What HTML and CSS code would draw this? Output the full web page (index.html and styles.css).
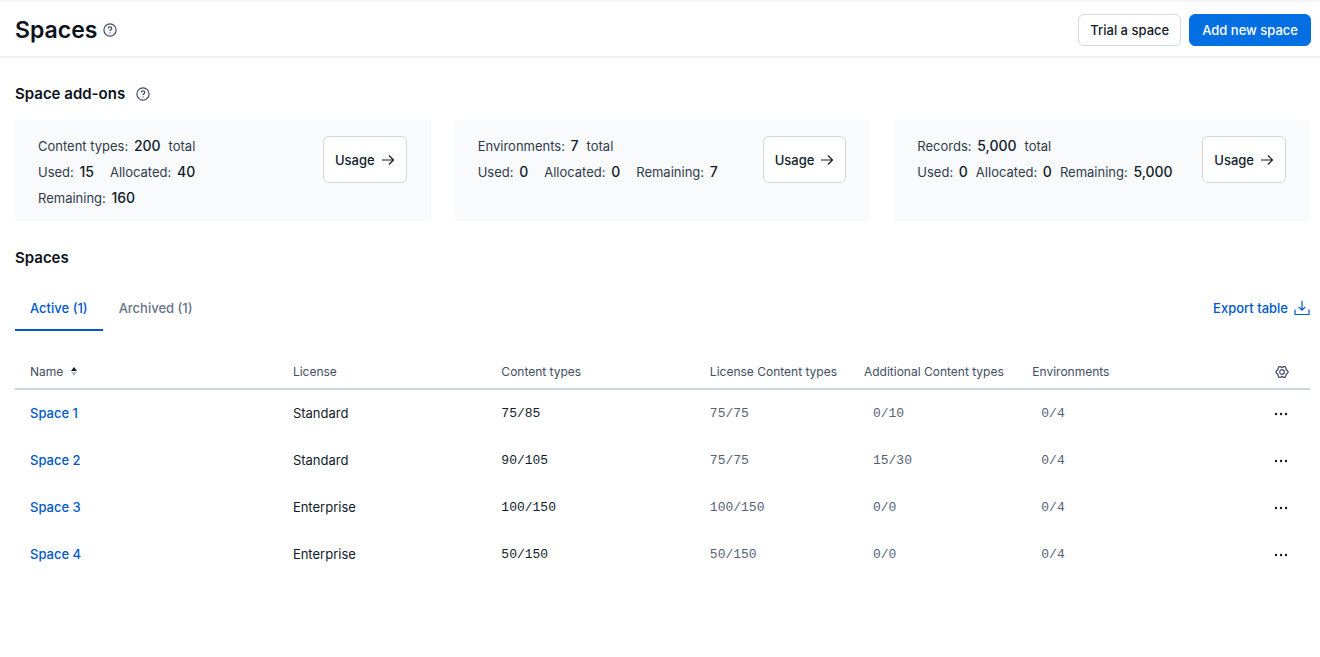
FILE: index.html
```html
<!DOCTYPE html>
<html lang="en">
<head>
    <meta charset="UTF-8">
    <meta name="viewport" content="width=device-width, initial-scale=1.0">
    <title>Spaces</title>
    <link rel="stylesheet" href="styles.css">
</head>
<body>
    <svg class="sprite" aria-hidden="true">
        <symbol id="icon-help" viewBox="0 0 14 14">
            <circle cx="7" cy="7" r="6.1"/>
            <path d="M5.2 5.6c0-1 .8-1.7 1.8-1.7s1.8.7 1.8 1.6c0 1.2-1.8 1.3-1.8 2.5"/>
            <path d="M7 9.5v1"/>
        </symbol>
        <symbol id="icon-arrow" viewBox="0 0 14 12">
            <path d="M1 6h11.5M8 1.5L12.5 6 8 10.5"/>
        </symbol>
        <symbol id="icon-dots" viewBox="0 0 14 4">
            <circle cx="2" cy="2" r="1.2"/>
            <circle cx="7" cy="2" r="1.2"/>
            <circle cx="12" cy="2" r="1.2"/>
        </symbol>
    </svg>

    <header class="page-header">
        <div class="title-group">
            <h1>Spaces</h1>
            <svg class="icon help-icon"><use href="#icon-help"/></svg>
        </div>
        <div class="button-group">
            <button class="btn" type="button">Trial a space</button>
            <button class="btn btn-primary" type="button">Add new space</button>
        </div>
    </header>

    <main>
        <div class="title-group addons-title">
            <h2>Space add-ons</h2>
            <svg class="icon help-icon"><use href="#icon-help"/></svg>
        </div>

        <section class="cards">
            <div class="card">
                <div class="card-info">
                    <div class="card-total"><span>Content types: <b>200</b></span><span>total</span></div>
                    <div class="card-stats"><span>Used: <b>15</b></span><span>Allocated: <b>40</b></span></div>
                    <div class="card-stats"><span>Remaining: <b>160</b></span></div>
                </div>
                <button class="btn usage-btn" type="button">Usage <svg class="icon arrow-icon"><use href="#icon-arrow"/></svg></button>
            </div>
            <div class="card">
                <div class="card-info">
                    <div class="card-total"><span>Environments: <b>7</b></span><span>total</span></div>
                    <div class="card-stats"><span>Used: <b>0</b></span><span>Allocated: <b>0</b></span><span>Remaining: <b>7</b></span></div>
                </div>
                <button class="btn usage-btn" type="button">Usage <svg class="icon arrow-icon"><use href="#icon-arrow"/></svg></button>
            </div>
            <div class="card">
                <div class="card-info">
                    <div class="card-total"><span>Records: <b>5,000</b></span><span>total</span></div>
                    <div class="card-stats compact"><span>Used: <b>0</b></span><span>Allocated: <b>0</b></span><span>Remaining: <b>5,000</b></span></div>
                </div>
                <button class="btn usage-btn" type="button">Usage <svg class="icon arrow-icon"><use href="#icon-arrow"/></svg></button>
            </div>
        </section>

        <h2 class="spaces-title">Spaces</h2>

        <div class="toolbar">
            <div class="tabs" role="tablist">
                <button class="tab active" type="button" role="tab" aria-selected="true">Active (1)</button>
                <button class="tab" type="button" role="tab" aria-selected="false">Archived (1)</button>
            </div>
            <a class="export-link" href="#">Export table
                <svg class="icon export-icon" viewBox="0 0 16 16">
                    <path d="M8 .8v9.4M4.8 7L8 10.2 11.2 7M1 9.5v5h14v-5"/>
                </svg>
            </a>
        </div>

        <table class="spaces-table">
            <colgroup>
                <col class="col-name">
                <col class="col-wide">
                <col class="col-wide">
                <col class="col-included">
                <col class="col-additional">
                <col>
                <col class="col-actions">
            </colgroup>
            <thead>
                <tr>
                    <th>Name
                        <svg class="sort-icon" viewBox="0 0 6 9">
                            <path d="M3 0l3 4H0z" fill="#111b2b"/>
                            <path d="M3 9L0 5h6z" fill="#b4bcc7"/>
                        </svg>
                    </th>
                    <th>License</th>
                    <th>Content types</th>
                    <th>License Content types</th>
                    <th>Additional Content types</th>
                    <th>Environments</th>
                    <th class="actions">
                        <button class="icon-btn" type="button" aria-label="Columns">
                            <svg class="icon gear-icon" viewBox="0 0 14 14">
                                <path d="M4 1.7h1.5l1.5.8 1.5-.8H10l1.1 1.9v1.2l1.4.9.7 1.3-.7 1.3-1.4.9v1.2L10 12.3H8.5L7 11.5l-1.5.8H4l-1.1-1.9V9.2l-1.4-.9L.8 7l.7-1.3 1.4-.9V3.6z"/>
                                <circle cx="7" cy="7" r="2.3"/>
                            </svg>
                        </button>
                    </th>
                </tr>
            </thead>
            <tbody>
                <tr>
                    <td><a href="#">Space 1</a></td>
                    <td>Standard</td>
                    <td class="num">75/85</td>
                    <td class="num muted">75/75</td>
                    <td class="num muted inset">0/10</td>
                    <td class="num muted inset">0/4</td>
                    <td class="actions"><button class="icon-btn" type="button" aria-label="Actions"><svg class="dots-icon"><use href="#icon-dots"/></svg></button></td>
                </tr>
                <tr>
                    <td><a href="#">Space 2</a></td>
                    <td>Standard</td>
                    <td class="num">90/105</td>
                    <td class="num muted">75/75</td>
                    <td class="num muted inset">15/30</td>
                    <td class="num muted inset">0/4</td>
                    <td class="actions"><button class="icon-btn" type="button" aria-label="Actions"><svg class="dots-icon"><use href="#icon-dots"/></svg></button></td>
                </tr>
                <tr>
                    <td><a href="#">Space 3</a></td>
                    <td>Enterprise</td>
                    <td class="num">100/150</td>
                    <td class="num muted">100/150</td>
                    <td class="num muted inset">0/0</td>
                    <td class="num muted inset">0/4</td>
                    <td class="actions"><button class="icon-btn" type="button" aria-label="Actions"><svg class="dots-icon"><use href="#icon-dots"/></svg></button></td>
                </tr>
                <tr>
                    <td><a href="#">Space 4</a></td>
                    <td>Enterprise</td>
                    <td class="num">50/150</td>
                    <td class="num muted">50/150</td>
                    <td class="num muted inset">0/0</td>
                    <td class="num muted inset">0/4</td>
                    <td class="actions"><button class="icon-btn" type="button" aria-label="Actions"><svg class="dots-icon"><use href="#icon-dots"/></svg></button></td>
                </tr>
            </tbody>
        </table>
    </main>
</body>
</html>
```
FILE: styles.css
```css
* {
    box-sizing: border-box;
}

body {
    font-family: Inter, 'Liberation Sans', sans-serif;
    font-size: 13px;
    color: #111b2b;
    background: #fff;
    margin: 0;
}

h1, h2 {
    margin: 0;
    font-weight: 600;
    color: #0c111b;
}

h1 {
    font-size: 23px;
    line-height: 28px;
}

h2 {
    font-size: 15px;
    line-height: 22px;
}

a {
    color: #0059c8;
    text-decoration: none;
}

button {
    font-family: inherit;
    cursor: pointer;
}

.sprite {
    display: none;
}

.icon {
    fill: none;
    stroke: currentColor;
    stroke-width: 1.2;
    flex: none;
}

.help-icon {
    width: 14px;
    height: 14px;
    color: #414d63;
}

.page-header {
    display: flex;
    align-items: center;
    justify-content: space-between;
    height: 58px;
    padding: 2px 9px 0 15px;
    border-top: 2px solid #f3f4f6;
    border-bottom: 2px solid #f0f1f3;
}

.title-group {
    display: flex;
    align-items: center;
    gap: 6px;
}

.button-group {
    display: flex;
    gap: 8px;
}

.btn {
    height: 32px;
    padding: 0 11px;
    border: 1px solid #d3d8df;
    border-radius: 6px;
    background: #fff;
    color: #111b2b;
    font-size: 13px;
    font-weight: 500;
    white-space: nowrap;
}

.btn-primary {
    padding: 0 12px;
    background: #036fe3;
    border-color: #036fe3;
    color: #fff;
}

main {
    padding: 25px 10px 40px 15px;
}

.addons-title {
    gap: 11px;
}

.cards {
    display: grid;
    grid-template-columns: repeat(3, 1fr);
    gap: 24px;
    margin-top: 15px;
}

.card {
    display: flex;
    align-items: flex-start;
    justify-content: space-between;
    padding: 13px 24px 10px 23px;
    background: #f8fafb;
    line-height: 26px;
    color: #303a4b;
    white-space: nowrap;
}

.card b {
    margin-left: 2px;
    font-size: 14px;
    font-weight: 500;
    color: #111b2b;
}

.card-total,
.card-stats {
    display: flex;
    height: 26px;
}

.card-total {
    gap: 8px;
}

.card-stats {
    gap: 16px;
}

.card-stats.compact {
    gap: 8px;
}

.usage-btn {
    display: flex;
    align-items: center;
    gap: 6px;
    height: 47px;
    margin-top: 3px;
}

.arrow-icon {
    width: 14px;
    height: 12px;
}

.spaces-title {
    margin-top: 26px;
}

.toolbar {
    display: flex;
    align-items: center;
    justify-content: space-between;
    margin-top: 16px;
}

.tabs {
    display: flex;
    gap: 1px;
}

.tab {
    height: 46px;
    padding: 2px 15px 0;
    border: 0;
    border-bottom: 2px solid transparent;
    background: none;
    color: #67728a;
    font-size: 13px;
    font-weight: 500;
}

.tab.active {
    border-color: #0059c8;
    color: #0059c8;
}

.export-link {
    display: flex;
    align-items: center;
    gap: 6px;
    font-weight: 500;
}

.export-icon {
    width: 16px;
    height: 16px;
}

.spaces-table {
    width: 100%;
    margin-top: 24px;
    border-collapse: collapse;
    table-layout: fixed;
}

.col-name {
    width: 20.3%;
}

.col-wide {
    width: 16.1%;
}

.col-included {
    width: 11.9%;
}

.col-additional {
    width: 13%;
}

.col-actions {
    width: 60px;
}

.spaces-table th,
.spaces-table td {
    padding: 0 0 0 15px;
    text-align: left;
    white-space: nowrap;
}

.spaces-table th {
    height: 34px;
    border-bottom: 2px solid #cfd5dc;
    color: #414d63;
    font-size: 12px;
    font-weight: 400;
}

.spaces-table td {
    height: 47px;
    line-height: 20px;
}

.spaces-table td a {
    font-weight: 500;
}

.spaces-table .num {
    padding-top: 2px;
    font-family: 'Liberation Mono', monospace;
}

.spaces-table .muted {
    color: #566176;
}

.spaces-table .inset {
    padding-left: 24px;
}

.spaces-table .actions {
    padding: 0 21px 0 0;
    text-align: right;
}

.icon-btn {
    padding: 0;
    border: 0;
    background: none;
    color: #414d63;
    vertical-align: middle;
}

.icon-btn svg {
    display: block;
}

.sort-icon {
    width: 6px;
    height: 9px;
    margin-left: 4px;
}

.gear-icon {
    width: 14px;
    height: 14px;
}

.dots-icon {
    width: 14px;
    height: 4px;
    margin-right: 1px;
    fill: #111b2b;
}
```
